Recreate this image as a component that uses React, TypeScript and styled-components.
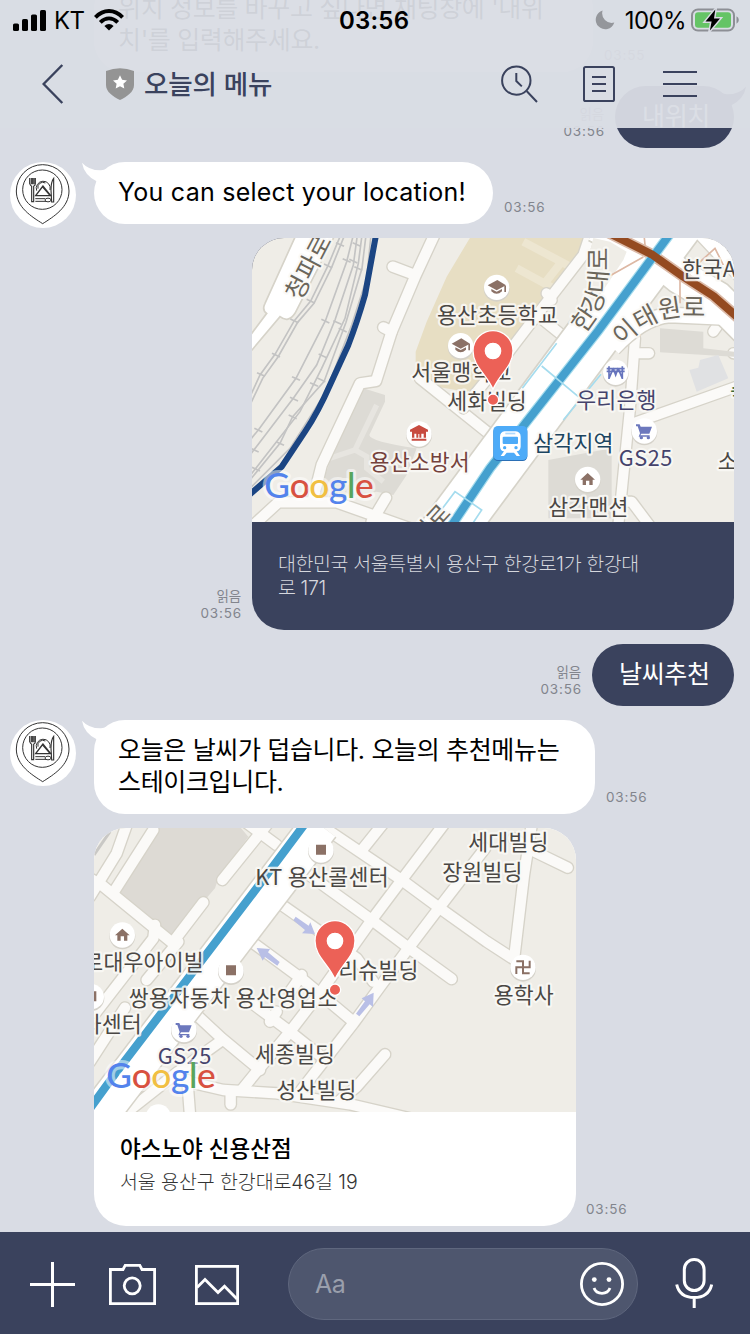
import React from 'react';
import styled, { createGlobalStyle } from 'styled-components';

const NAVY = '#3a425d';
const CHAT_BG = '#d9dce4';
const FONT = `Inter, "Noto Sans CJK KR", sans-serif`;
const MAP_FONT = `"Noto Sans CJK KR", sans-serif`;

const GlobalStyle = createGlobalStyle`
  * { box-sizing: border-box; }
  body { margin: 0; background: ${CHAT_BG}; font-family: ${FONT}; }
  svg { display: block; }
`;

const Screen = styled.div`
  position: relative;
  width: 750px;
  height: 1334px;
  overflow: hidden;
  display: flex;
  flex-direction: column;
  background: ${CHAT_BG};
`;

/* ---------- top bar ---------- */

const Top = styled.header`
  position: absolute;
  top: 0;
  left: 0;
  right: 0;
  height: 128px;
  z-index: 2;
  display: flex;
  flex-direction: column;
  background: rgba(217, 220, 228, 0.95);
`;

const StatusBar = styled.div`
  height: 40px;
  padding: 0 11px 0 13px;
  display: grid;
  grid-template-columns: 326px auto 1fr;
  align-items: center;
  color: #000;
  font-size: 24px;
`;

const StatusGroup = styled.div<{ $end?: boolean }>`
  display: flex;
  align-items: center;
  justify-content: ${(p) => (p.$end ? 'flex-end' : 'flex-start')};
`;

const Carrier = styled.span`
  margin: 1px 10px 0 8px;
  font-size: 24px;
  letter-spacing: -0.6px;
`;

const Clock = styled.span`
  font-weight: 600;
  font-size: 24px;
  letter-spacing: 0.2px;
  padding-top: 1px;
`;

const Percent = styled.span`
  margin: 1px 5px 0 10px;
  font-size: 24px;
  letter-spacing: -0.6px;
`;

const NavBar = styled.div`
  height: 88px;
  display: flex;
  align-items: center;
  padding: 0 53px 0 42px;
  color: ${NAVY};
`;

const Title = styled.h1`
  margin: 0 0 0 10px;
  flex: 1;
  font-size: 26.5px;
  font-weight: 500;
  letter-spacing: -0.1px;
  line-height: 40px;
`;

const NavIcons = styled.div`
  display: flex;
  align-items: center;
  gap: 48px;
`;

const SearchSlot = styled.div`
  margin-right: -3px;
`;

/* ---------- conversation ---------- */

const Chat = styled.main`
  height: 1232px;
  flex: none;
  overflow: hidden;
  display: flex;
  flex-direction: column;
  justify-content: flex-end;
  gap: 14px;
  padding: 0 16px 6px 10px;
`;

const Row = styled.div<{ $mine?: boolean }>`
  display: flex;
  flex: none;
  flex-direction: ${(p) => (p.$mine ? 'row-reverse' : 'row')};
  align-items: flex-end;
`;

const AvatarSlot = styled.div`
  width: 84px;
  flex: none;
  align-self: flex-start;
`;

const AvatarDisc = styled.div`
  width: 66px;
  height: 66px;
  margin-bottom: -10px;
  border-radius: 50%;
  background: #fff;
`;

const Bubble = styled.div<{ $mine?: boolean; $width: number }>`
  position: relative;
  width: ${(p) => p.$width}px;
  padding: 14px 0 16px ${(p) => (p.$mine ? 27 : 24)}px;
  border-radius: 31px;
  background: ${(p) => (p.$mine ? NAVY : '#fff')};
  color: ${(p) => (p.$mine ? '#fff' : '#000')};
`;

const Message = styled.p<{ $spacing?: number }>`
  margin: 0;
  font-size: 25px;
  line-height: 32px;
  white-space: pre;
  letter-spacing: ${(p) => p.$spacing ?? -0.35}px;
`;

const Tail = styled.svg<{ $mine?: boolean }>`
  position: absolute;
  top: 0;
  ${(p) => (p.$mine ? 'right: -12px; transform: scaleX(-1);' : 'left: -12px;')}
`;

const Meta = styled.div<{ $mine?: boolean; $gap?: number }>`
  display: flex;
  flex-direction: column;
  align-items: ${(p) => (p.$mine ? 'flex-end' : 'flex-start')};
  margin: ${(p) => (p.$mine ? '0 10px 0 0' : `0 0 0 ${p.$gap ?? 11}px`)};
  padding-bottom: 8px;
  color: #82858d;
  font-size: 13.5px;
  line-height: 18px;
  letter-spacing: 0.85px;
`;

const Read = styled.span`
  font-size: 13.5px;
  letter-spacing: -0.2px;
  line-height: 16px;
  padding-right: 1px;
`;

const Card = styled.div<{ $mine?: boolean; $height: number }>`
  width: 482px;
  height: ${(p) => p.$height}px;
  border-radius: 32px;
  overflow: hidden;
  background: ${(p) => (p.$mine ? NAVY : '#fff')};
`;

const CardBody = styled.div`
  padding: 22px 26px;
`;

const PlaceTitle = styled.h2`
  margin: 0;
  font-size: 22.5px;
  line-height: 30px;
  font-weight: 500;
  letter-spacing: 0;
  color: #000;
`;

const Address = styled.p<{ $mine?: boolean }>`
  margin: ${(p) => (p.$mine ? '8px' : '6px')} 0 0;
  font-size: 19.5px;
  line-height: 24px;
  font-weight: 300;
  white-space: pre;
  letter-spacing: ${(p) => (p.$mine ? '-0.4px' : '-0.1px')};
  color: ${(p) => (p.$mine ? '#d5d7dd' : '#333')};
`;

/* ---------- composer ---------- */

const Composer = styled.footer`
  height: 102px;
  flex: none;
  display: flex;
  align-items: center;
  padding: 2px 36px 0 29px;
  background: ${NAVY};
`;

const Tools = styled.div`
  display: grid;
  grid-template-columns: 79px 85px 95px;
  align-items: center;
`;

const Field = styled.div`
  width: 350px;
  height: 72px;
  display: flex;
  align-items: center;
  justify-content: space-between;
  padding: 0 13px 0 26px;
  border: 1px solid #5f677e;
  border-radius: 36px;
  background: #4e566e;
  color: #9a9fac;
  font-size: 25px;
  letter-spacing: -0.6px;
`;

const MicSlot = styled.div`
  margin: -2px 0 0 37px;
`;

/* ---------- small drawings ---------- */

const BubbleTail = ({ mine }: { mine?: boolean }) => (
  <Tail $mine={mine} width="32" height="22" viewBox="0 0 32 22">
    <path d="M0 .7Q7 8.5 19 8.3Q25 8 31 3L31 21L15 19.5Q2 13 0 .7Z" fill={mine ? NAVY : '#fff'} />
  </Tail>
);

const Avatar = () => (
  <AvatarDisc>
    <svg width="66" height="66" viewBox="30 486 198 198" fill="none" stroke="#333" strokeWidth="3">
      <path d="M128 671C95 650 49 622 49 573A79 79 0 0 1 207 573C207 622 161 650 128 671Z" />
      <circle cx="127" cy="569" r="59" />
      <path d="M89 534V551Q91 557 95 559V605H101V559Q106 556 106 551V534M94 534V553M98 534V553M102 534V553" strokeWidth="3.4" />
      <path d="M161 535Q153 545 153 570L155 606H161Z" strokeWidth="3.4" />
      <path d="M106 596H135M106 604H138" />
      <path d="M110 572A21 21 0 1 1 150 570M114 566A15 15 0 0 1 136 549" />
      <path d="M129 558L107 587H152ZM129 562L150 586" strokeWidth="4" />
      <ellipse cx="144" cy="600" rx="9" ry="5.5" />
    </svg>
  </AvatarDisc>
);

const Signal = () => (
  <svg width="33" height="21" viewBox="0 0 33 21">
    <rect x="0" y="13.5" width="6" height="7.5" rx="1.6" />
    <rect x="9" y="9" width="6" height="12" rx="1.6" />
    <rect x="18" y="4.5" width="6" height="16.5" rx="1.6" />
    <rect x="27" y="0" width="6" height="21" rx="1.6" />
  </svg>
);

const Wifi = () => (
  <svg width="30" height="22" viewBox="0 0 30 22" fill="none" stroke="#000" strokeWidth="3.9">
    <path d="M1.4 8.3Q7.5 2 15 2Q22.5 2 28.6 8.3" />
    <path d="M6.3 13.4Q10.3 9.4 15 9.4Q19.7 9.4 23.7 13.4" />
    <path d="M15 21.5L10.4 17Q12.4 14.9 15 14.9Q17.6 14.9 19.6 17Z" fill="#000" stroke="none" />
  </svg>
);

const Moon = () => (
  <svg width="20" height="20" viewBox="0 0 20 20">
    <path d="M7.6.6A9.5 9.5 0 1 0 19.3 12.6A9.6 9.6 0 0 1 7.6.6Z" fill="#94969b" />
  </svg>
);

const Battery = () => (
  <svg width="48" height="24" viewBox="0 0 48 24">
    <rect x="1" y="1.4" width="42" height="21.2" rx="6" fill="none" stroke="#8d8f95" strokeWidth="2" />
    <rect x="4" y="4.3" width="36" height="15.4" rx="3.2" fill="#65c466" />
    <path d="M45.5 8.2Q47.8 9.5 47.8 12Q47.8 14.5 45.5 15.8Z" fill="#8d8f95" />
    <path d="M24.3 1.6L14.5 13.4H20.6L18.9 22.4L29 10.4H23Z" fill="#000" stroke={CHAT_BG} strokeWidth="3" paintOrder="stroke" />
  </svg>
);

const Back = () => (
  <svg width="22" height="40" viewBox="0 0 22 40" fill="none" stroke={NAVY} strokeWidth="2.4">
    <path d="M20.3 1L1.6 20L20.3 39" />
  </svg>
);

const ShieldSlot = styled.div`
  margin: 0 0 0 42px;
`;

const Shield = () => (
  <svg width="28" height="32" viewBox="0 0 28 32">
    <path d="M0 3Q7 .3 14 .3Q21 .3 28 3V17C28 24 21 28.5 14 32C7 28.5 0 24 0 17Z" fill="#949494" />
    <path d="M14 7.3L16.1 11.8L21 12.4L17.4 15.8L18.3 20.6L14 18.2L9.7 20.6L10.6 15.8L7 12.4L11.9 11.8Z" fill="#fff" />
  </svg>
);

const SearchClock = () => (
  <svg width="37" height="38" viewBox="0 0 37 38" fill="none" stroke={NAVY} strokeWidth="2">
    <circle cx="15.3" cy="15.6" r="14.2" />
    <path d="M25.6 26L36 37M15.3 8V16L20.8 21.4" />
  </svg>
);

const Note = () => (
  <svg width="32" height="36" viewBox="0 0 32 36" fill="none" stroke={NAVY} strokeWidth="2">
    <rect x="1" y="1" width="30" height="34" rx="1.6" />
    <path d="M9 11H23M9 18H23M9 25H23" />
  </svg>
);

const Menu = () => (
  <svg width="34" height="28" viewBox="0 0 34 28" fill="none" stroke={NAVY} strokeWidth="2">
    <path d="M0 2H34M0 14H34M0 26H34" />
  </svg>
);

const Plus = () => (
  <svg width="46" height="46" viewBox="0 0 46 46" stroke="#fff" strokeWidth="3">
    <path d="M1 23.5H46M23.5 1V46" />
  </svg>
);

const Camera = () => (
  <svg width="48" height="46" viewBox="0 0 48 46" fill="none" stroke="#fff" strokeWidth="2.8">
    <path d="M2.4 8.5H15L17.2 4.4H31.8L34 8.5H46.6V42.6H2.4Z" />
    <circle cx="24.2" cy="24.8" r="8" />
  </svg>
);

const Picture = () => (
  <svg width="46" height="46" viewBox="0 0 46 46" fill="none" stroke="#fff" strokeWidth="2.8">
    <rect x="3.4" y="5.4" width="41.2" height="37.2" />
    <path d="M4 26.5L12 18.5L25 31.5L31.5 25.2L44 38" />
  </svg>
);

const Smile = () => (
  <svg width="44" height="44" viewBox="0 0 44 44" fill="none" stroke="#fff" strokeWidth="2.8">
    <circle cx="22" cy="22" r="20.6" />
    <circle cx="14.3" cy="17.6" r="2.4" fill="#fff" stroke="none" />
    <circle cx="29" cy="17.6" r="2.4" fill="#fff" stroke="none" />
    <path d="M14 26Q16 31.3 22 31.3Q28 31.3 30 26" />
  </svg>
);

const Mic = () => (
  <svg width="38" height="52" viewBox="0 0 38 52" fill="none" stroke="#fff" strokeWidth="3">
    <rect x="9.3" y="2.5" width="19.8" height="31" rx="9.9" />
    <path d="M1.7 27.5Q4.5 40.5 19.2 40.5Q33.8 40.5 36.7 27.5M19.2 40.5V51" />
  </svg>
);

/* ---------- maps ---------- */

const Label = styled.text<{ $size?: number }>`
  font-family: ${MAP_FONT};
  font-size: ${(p) => p.$size ?? 65}px;
  paint-order: stroke;
  stroke: rgba(250, 249, 246, 0.85);
  stroke-width: 13px;
  stroke-linejoin: round;
`;

interface PlaceProps {
  x: number;
  end: number;
  y: number;
  color?: string;
  children: string;
}

const Place = ({ x, end, y, color = '#4a4744', children }: PlaceProps) => (
  <Label x={x} y={y + 23} textLength={end - x} fill={color}>
    {children}
  </Label>
);

const Roads = ({ d, w = 30 }: { d: string[]; w?: number }) => (
  <g fill="none" strokeLinecap="round" strokeLinejoin="round">
    {d.map((p) => (
      <path key={p} d={p} stroke="#d6d3c9" strokeWidth={w + 8} />
    ))}
    {d.map((p) => (
      <path key={p} d={p} stroke="#fbfaf8" strokeWidth={w} />
    ))}
  </g>
);

type Glyph = 'school' | 'fire' | 'bank' | 'cart' | 'home' | 'square' | 'temple' | 'none';

const GLYPHS: Record<Glyph, React.ReactNode> = {
  school: (
    <g fill="#8b7166">
      <path d="M-27 -6L2 -22L28 -6L0 9Z" />
      <path d="M-16 5V12Q0 27 16 12V5L0 13ZM23 -5H28V14H23Z" />
    </g>
  ),
  fire: (
    <g fill="#c84b40">
      <path d="M-27 -13L0 -27L27 -13V-7H-27ZM-21 -7H21V11H14V-1H7V11H1V0H-2V11H-8V-1H-14V11H-21ZM-22 14H22V20H-22Z" />
    </g>
  ),
  bank: (
    <g stroke="#6674bd" strokeWidth="5" fill="none">
      <path d="M-27 -11H27M-27 -3H27M-20 -18V20M20 -18V20M-20 18L-9 -8M20 18L9 -8M-8 -14L0 8L8 -14" />
    </g>
  ),
  cart: (
    <g fill="#6c78bd">
      <path d="M-25 -20H-14L-11 -13H23L15 8H-9L-12 13H16V17H-17L-13 7L-20 -14H-25Z" />
      <circle cx="-9" cy="20" r="5" />
      <circle cx="12" cy="20" r="5" />
    </g>
  ),
  home: <path d="M-22 1L0 -19L22 1H15V17H5V4H-5V17H-15V1Z" fill="#8b7166" />,
  square: <path d="M-15 -16H15V14H-15Z" fill="#8b7166" />,
  temple: (
    <path
      d="M20 -20V0H-20V20M-20 -18H0V18H20"
      fill="none"
      stroke="#8b7166"
      strokeWidth="6"
    />
  ),
  none: null,
};

const Poi = ({ x, y, glyph }: { x: number; y: number; glyph: Glyph }) => (
  <g transform={`translate(${x} ${y})`}>
    <circle cy="4" r="39" fill="#d5d2ca" />
    <circle r="38" fill="#fff" />
    {GLYPHS[glyph]}
  </g>
);

const Pin = ({ x }: { x: number }) => (
  <g transform={`translate(${x} 0)`} fill="#ec6157" stroke="#fff" strokeWidth="4">
    <path d="M0 463C-20 415 -60 395 -60 347A60 60 0 0 1 60 347C60 395 20 415 0 463Z" />
    <circle cy="348" r="23" fill="#fff" />
    <circle cy="494" r="17" />
  </g>
);

const Wordmark = styled.text`
  font-family: Lato, sans-serif;
  font-size: 106px;
  font-weight: 500;
  paint-order: stroke;
  stroke: rgba(255, 255, 255, 0.5);
  stroke-width: 18px;
  stroke-linejoin: round;
`;

const GoogleMark = ({ x }: { x: number }) => (
  <Wordmark x={x} y="790" textLength="328">
    <tspan fill="#5383ec">G</tspan>
    <tspan fill="#d85140">o</tspan>
    <tspan fill="#f1bf42">o</tspan>
    <tspan fill="#5383ec">g</tspan>
    <tspan fill="#58a55c">l</tspan>
    <tspan fill="#d85140">e</tspan>
  </Wordmark>
);

const TICKS = [
  [270, 28], [234, 92], [182, 198], [133, 257], [78, 360], [33, 418], [290, 76], [226, 258], [138, 430], [25, 585],
  [320, 28], [310, 78], [325, 100], [262, 262], [278, 285], [218, 362], [192, 448], [214, 434], [132, 492], [128, 545],
  [90, 625], [14, 645], [18, 702],
];

const BROWN_ROAD = 'M1065 -12L1205 58L1300 125L1390 183L1480 262';
const BLUE_LINE = 'M1262 -6L1045 287L720 700L606 870';

const LocationMap = () => (
  <svg width="482" height="284" viewBox="6 9 1446 852">
    <rect x="0" y="0" width="1460" height="870" fill="#efede7" />
    <path d="M665 0L590 125L530 260L497 350V400L560 455L650 470L720 440L830 265L980 80L1010 0Z" fill="#e7dec3" />
    <path d="M820 20L970 100M800 100L910 160M880 150L935 80" stroke="#ede6d1" strokeWidth="24" fill="none" />
    <path d="M340 460L405 480V500L358 600Q360 620 500 640L470 720L430 780L380 770L195 800L240 680Z" fill="#dddbd5" />
    <path d="M380 510L315 645M240 670L315 645L350 665V700L400 740" stroke="#e7e5e0" strokeWidth="16" fill="none" />

    <path
      d="M138 0L45 205Q35 225 50 235L0 302V352L90 245Q115 265 135 235L255 0Z"
      fill="#fff"
      stroke="#d6d3c9"
      strokeWidth="5"
    />
    <g fill="none" stroke="#c3c3c3" strokeWidth="5">
      <path d="M272 0L234 92L182 198L133 257L75 358L30 420L0 485" />
      <path d="M284 0L245 97L192 205L143 262L84 366L38 430L0 510" />
      <path d="M310 0L290 80L226 258L138 430L25 585L0 615" />
      <path d="M322 0L310 90L255 255L200 390L130 490L0 660" />
      <path d="M336 0L325 85L285 250L215 400L150 530L0 722" />
      <path d="M348 0L336 100L288 262L222 440L128 545L90 625L0 735" />
      <path d="M363 0L350 130L305 270L228 470L120 640L0 760" />
      {TICKS.map(([x, y]) => (
        <path key={`${x}-${y}`} d={`M${x - 12} ${y - 5}L${x + 12} ${y + 6}`} strokeWidth="5" />
      ))}
    </g>
    <path
      d="M378 0L345 180Q322 260 295 330L240 450Q205 530 165 590L95 695L0 778"
      fill="none"
      stroke="#1b4583"
      strokeWidth="18"
    />

    <Roads
      w={31}
      d={[
        'M553 0L495 125L425 290L378 438L330 445L250 615L215 690L190 790',
        'M495 120L428 95',
        'M425 290L400 277',
        'M0 880L85 802L260 802L480 880',
        'M365 860L408 788',
        'M510 430L710 590',
      ]}
    />
    <Roads
      w={30}
      d={[
        'M1020 0L1000 60L880 215L750 385L640 520',
        'M890 175L905 195',
        'M880 255L960 320',
        'M1155 310L1140 520L1105 870',
        'M1160 355L1197 355',
        'M1150 565L1460 455',
        'M1105 800L1145 800L1205 880',
        'M1390 290L1425 240',
        'M1450 355L1470 355',
      ]}
    />
    <path d="M1230 280L1360 290V340L1452 350V365L1230 352Z" fill="#dddbd5" />
    <path d="M1318 405L1345 398L1350 375L1405 360L1435 430L1340 470Z" fill="#e0e1e3" />
    <path d="M895 675L1085 640V850H895Z" fill="#dddbd5" />

    <g fill="none" stroke="#d6d3c9">
      <path d="M1290 -50L585 900" strokeWidth="168" />
      <path d="M1040 -30L1210 60L1290 125L1400 190L1500 290" strokeWidth="110" />
      <path d="M1330 -30L1480 130" strokeWidth="50" />
      <path d="M1090 340Q1180 245 1260 240L1480 250" strokeWidth="52" />
    </g>
    <g fill="none" stroke="#fff">
      <path d="M1290 -50L585 900" strokeWidth="158" />
      <path d="M1040 -30L1210 60L1290 125L1400 190L1500 290" strokeWidth="100" />
      <path d="M1330 -30L1480 130" strokeWidth="42" />
      <path d="M1090 340Q1180 245 1260 240L1480 250" strokeWidth="44" />
    </g>
    <path d="M1010 90L1030 9L1080 20L1130 50L1120 75L1030 210L990 230Z" fill="#efede7" />
    <path d="M1080 122L1180 66M1183 9L1188 60M1290 130V205M1345 85L1395 40L1420 90" stroke="#ddb8a4" strokeWidth="5" fill="none" />
    <path d={BROWN_ROAD} fill="none" stroke="#dcbba9" strokeWidth="34" strokeLinejoin="round" />
    <path d={BLUE_LINE} fill="none" stroke="#a6dced" strokeWidth="31" />
    <path d={BLUE_LINE} fill="none" stroke="#45a0ce" strokeWidth="24" />
    <path
      d="M817 460L920 325M940 555L1053 418M875 393L985 485M570 830L615 770L695 825L665 870"
      fill="none"
      stroke="#a5dcee"
      strokeWidth="5"
    />
    <path d={BROWN_ROAD} fill="none" stroke="#944a20" strokeWidth="24" strokeLinejoin="round" />

    <path id="hangang-line" d="M1002 296Q1064 225 1071 140L1071 -90" fill="none" />
    <path id="itaewon-line" d="M1117 335Q1180 268 1262 247Q1320 238 1440 250" fill="none" />
    <path id="cheongpa-line" d="M151 200L281 -48" fill="none" />
    <path id="bottom-line" d="M517 935L690 745" fill="none" />
    <Label fill="#6b665b" $size={75}>
      <textPath href="#hangang-line">한강대로</textPath>
    </Label>
    <Label fill="#6b665b" $size={75}>
      <textPath href="#itaewon-line">이태원로</textPath>
    </Label>
    <Label fill="#6b665b" $size={75}>
      <textPath href="#cheongpa-line">청파로</textPath>
    </Label>
    <Label fill="#6b665b" $size={72}>
      <textPath href="#bottom-line">대로</textPath>
    </Label>

    <Poi x={740} y={157} glyph="school" />
    <Poi x={632} y={332} glyph="school" />
    <Poi x={507} y={597} glyph="fire" />
    <Poi x={1097} y={412} glyph="bank" />
    <Poi x={1183} y={588} glyph="cart" />
    <Poi x={1013} y={733} glyph="home" />
    <circle cx="1420" cy="18" r="30" fill="#fff" />

    <Place x={561} end={924} y={240}>용산초등학교</Place>
    <Place x={484} end={784} y={413}>서울맹학교</Place>
    <Place x={592} end={830} y={498}>세화빌딩</Place>
    <Place x={359} end={659} y={682} color="#74413c">용산소방서</Place>
    <Place x={979} end={1219} y={495} color="#45436c">우리은행</Place>
    <Place x={850} end={1090} y={625} color="#1c4560">삼각지역</Place>
    <Place x={1106} end={1267} y={669} color="#45436c">GS25</Place>
    <Place x={895} end={1135} y={817}>삼각맨션</Place>
    <Place x={1296} end={1458} y={102}>한국A</Place>
    <Place x={1403} end={1463} y={680}>소</Place>
    <Place x={1440} end={1500} y={470} color="#3d6b3a">숙</Place>

    <g transform="translate(730 573)">
      <rect y="3" width="102" height="102" rx="14" fill="#2b6fb5" />
      <rect width="102" height="102" rx="14" fill="#4dabf8" />
      <path d="M34 16H67Q82 18 82 32V62Q81 74 70 76L80 90H70L62 80H40L32 90H22L32 76Q21 74 20 62V32Q20 18 34 16Z" fill="#fff" />
      <rect x="28" y="32" width="46" height="22" rx="3" fill="#4dabf8" />
      <rect x="36" y="20" width="30" height="5" fill="#4dabf8" opacity=".45" />
      <circle cx="34" cy="65" r="5" fill="#4dabf8" />
      <circle cx="68" cy="65" r="5" fill="#4dabf8" />
    </g>
    <GoogleMark x={43} />
    <Pin x={729} />
  </svg>
);

const RestaurantMap = () => (
  <svg width="482" height="284" viewBox="12 9 1446 852">
    <rect x="0" y="0" width="1470" height="870" fill="#efede7" />
    <path d="M205 0H445L475 35L385 160L375 190L250 335L205 300L85 200Z" fill="#dddad4" />
    <path d="M12 90L60 20" stroke="#c9c8c5" strokeWidth="9" />
    <Roads
      w={31}
      d={[
        'M110 0L80 85L0 215',
        'M190 15L75 195',
        'M-10 155L35 180L255 360',
        'M195 300L190 340L0 585',
        'M170 465L265 350',
        'M0 710L105 548',
        'M340 232L250 350',
        'M397 165L530 0',
        'M465 -10L560 60',
        'M600 -60L720 20L935 165L1050 250L1190 350L1275 405',
        'M610 115L720 195L845 285L955 368L1085 462',
        'M540 215L690 320L800 400L850 470',
        'M450 325L640 465L790 590',
        'M635 450L600 500',
        'M320 570L395 640L510 735',
        'M480 530L600 620L700 700',
        'M540 590L560 560',
        'M270 765L400 795L560 805L780 838L960 880',
        'M1060 0L935 165L845 285L700 490L600 620L500 740L455 795',
        'M1185 70L1050 245L955 370L870 485L790 595L630 800',
        'M880 -5L820 70',
        'M1325 0L1302 150L1273 395',
        'M1270 40L1330 78L1433 128',
        'M885 688L800 785L745 830',
        'M100 870L265 740L390 650',
        'M300 870L292 765',
        'M422 800V838',
      ]}
    />
    <path d="M690 0L0 905" stroke="#d6d3c9" strokeWidth="124" fill="none" />
    <path d="M690 0L0 905" stroke="#fff" strokeWidth="115" fill="none" />
    <path d="M648 -8L500 190L340 400L210 570L80 740L0 850" fill="none" stroke="#45a0ce" strokeWidth="25" />

    <g fill="#b9bfe6">
      <path d="M617 275L656 302L661 292L675 327L636 325L645 315L610 286Z" />
      <path d="M500 369L540 372L534 382L569 411L562 422L525 396L518 407Z" />
      <path d="M798 566L825 529L815 520L851 503L849 546L839 538L808 574Z" />
    </g>

    <Poi x={97} y={330} glyph="home" />
    <Poi x={693} y={75} glyph="square" />
    <Poi x={423} y={437} glyph="square" />
    <Poi x={4} y={515} glyph="square" />
    <Poi x={282} y={614} glyph="cart" />
    <Poi x={1299} y={427} glyph="temple" />
    <Poi x={205} y={876} glyph="none" />

    <Place x={496} end={896} y={158}>KT 용산콜센터</Place>
    <Place x={1135} end={1375} y={52}>세대빌딩</Place>
    <Place x={1057} end={1297} y={143}>장원빌딩</Place>
    <Place x={-20} end={341} y={413}>로대우아이빌</Place>
    <Place x={116} end={742} y={520}>쌍용자동차 용산영업소</Place>
    <Place x={-25} end={155} y={598}>차센터</Place>
    <Place x={203} end={364} y={694} color="#45436c">GS25</Place>
    <Place x={495} end={735} y={689}>세종빌딩</Place>
    <Place x={559} end={799} y={797}>성산빌딩</Place>
    <Place x={745} end={985} y={437}>리슈빌딩</Place>
    <Place x={1211} end={1391} y={510}>용학사</Place>

    <GoogleMark x={49} />
    <Pin x={735} />
  </svg>
);

/* ---------- page ---------- */

const App = () => (
  <>
    <GlobalStyle />
    <Screen>
      <Top>
        <StatusBar>
          <StatusGroup>
            <Signal />
            <Carrier>KT</Carrier>
            <Wifi />
          </StatusGroup>
          <Clock>03:56</Clock>
          <StatusGroup $end>
            <Moon />
            <Percent>100%</Percent>
            <Battery />
          </StatusGroup>
        </StatusBar>
        <NavBar>
          <Back />
          <ShieldSlot>
            <Shield />
          </ShieldSlot>
          <Title>오늘의 메뉴</Title>
          <NavIcons>
            <SearchSlot>
              <SearchClock />
            </SearchSlot>
            <Note />
            <Menu />
          </NavIcons>
        </NavBar>
      </Top>

      <Chat>
        <Row>
          <AvatarSlot />
          <Bubble $width={499}>
            <Message>{"위치 정보를 바꾸고 싶다면 채팅창에 '내위\n치'를 입력해주세요."}</Message>
          </Bubble>
          <Meta>03:55</Meta>
        </Row>
        <Row $mine>
          <Bubble $mine $width={119}>
            <BubbleTail mine />
            <Message>내위치</Message>
          </Bubble>
          <Meta $mine>
            <Read>읽음</Read>
            03:56
          </Meta>
        </Row>
        <Row>
          <AvatarSlot>
            <Avatar />
          </AvatarSlot>
          <Bubble $width={399}>
            <BubbleTail />
            <Message $spacing={0.25}>You can select your location!</Message>
          </Bubble>
          <Meta>03:56</Meta>
        </Row>
        <Row $mine>
          <Card $mine $height={392}>
            <LocationMap />
            <CardBody>
              <Address $mine>{'대한민국 서울특별시 용산구 한강로1가 한강대\n로 171'}</Address>
            </CardBody>
          </Card>
          <Meta $mine>
            <Read>읽음</Read>
            03:56
          </Meta>
        </Row>
        <Row $mine>
          <Bubble $mine $width={142}>
            <Message>날씨추천</Message>
          </Bubble>
          <Meta $mine>
            <Read>읽음</Read>
            03:56
          </Meta>
        </Row>
        <Row>
          <AvatarSlot>
            <Avatar />
          </AvatarSlot>
          <Bubble $width={501}>
            <BubbleTail />
            <Message>{'오늘은 날씨가 덥습니다. 오늘의 추천메뉴는\n스테이크입니다.'}</Message>
          </Bubble>
          <Meta>03:56</Meta>
        </Row>
        <Row>
          <AvatarSlot />
          <Card $height={398}>
            <RestaurantMap />
            <CardBody>
              <PlaceTitle>야스노야 신용산점</PlaceTitle>
              <Address>서울 용산구 한강대로46길 19</Address>
            </CardBody>
          </Card>
          <Meta $gap={10}>03:56</Meta>
        </Row>
      </Chat>

      <Composer>
        <Tools>
          <Plus />
          <Camera />
          <Picture />
        </Tools>
        <Field>
          <span>Aa</span>
          <Smile />
        </Field>
        <MicSlot>
          <Mic />
        </MicSlot>
      </Composer>
    </Screen>
  </>
);

export default App;
